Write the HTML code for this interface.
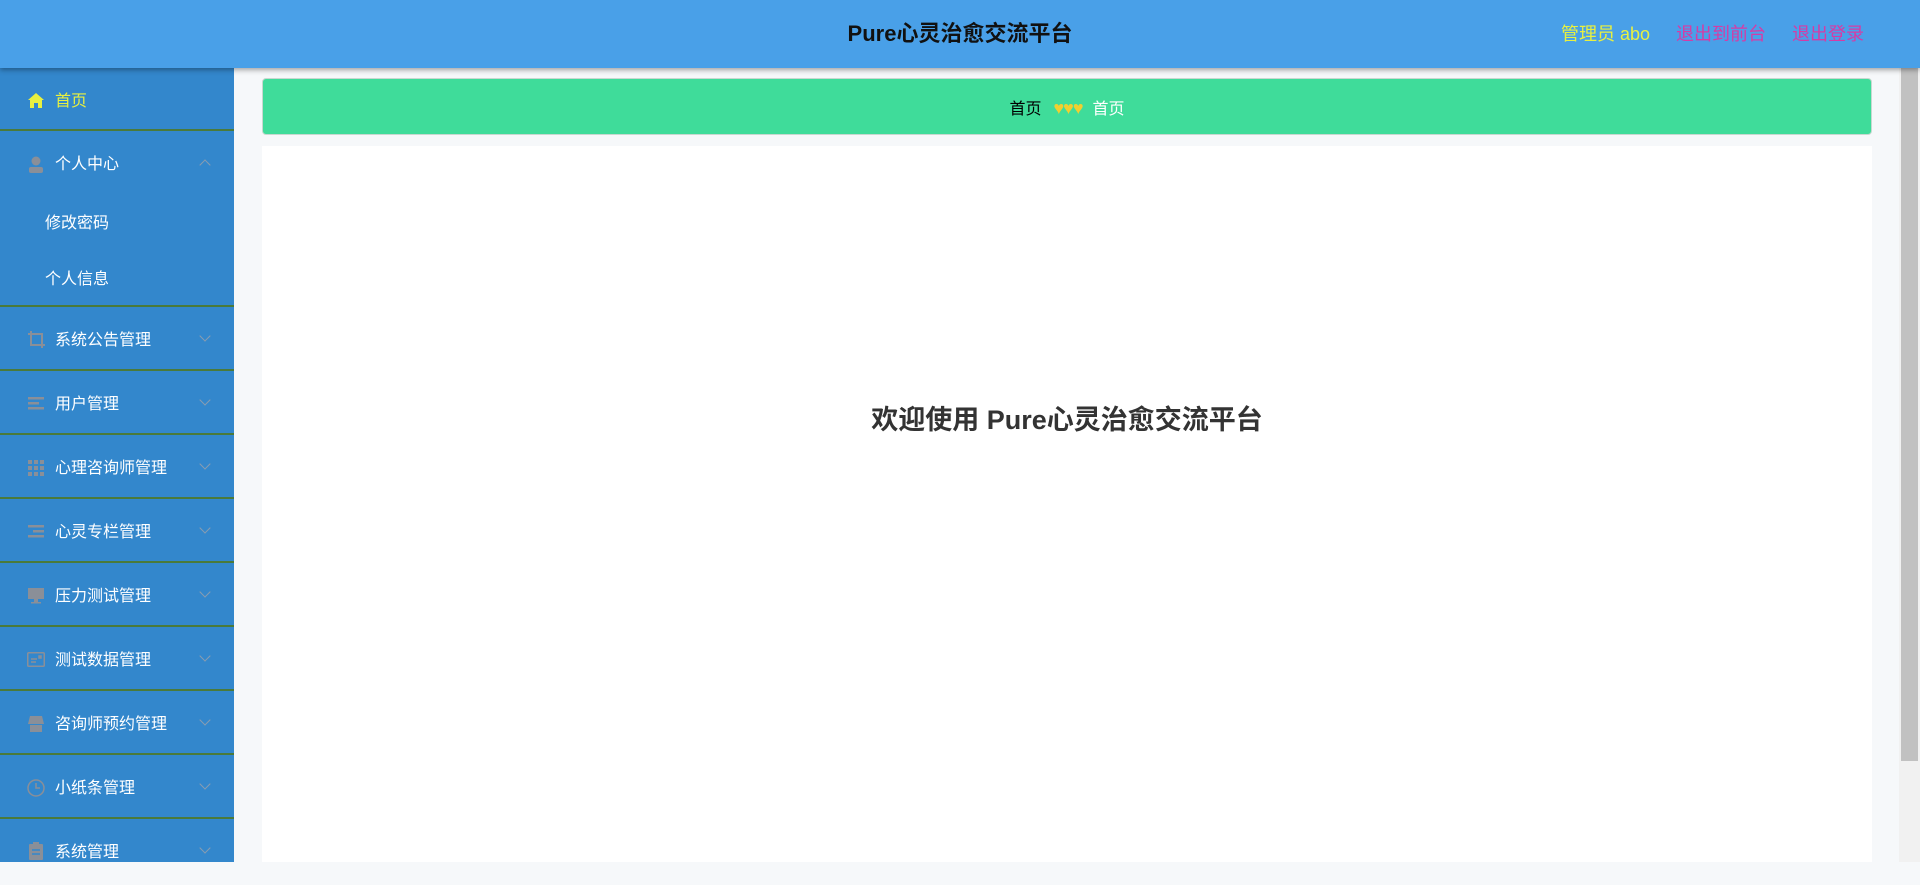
<!DOCTYPE html>
<html><head><meta charset="utf-8"><style>
*{margin:0;padding:0;box-sizing:border-box}
body{width:1920px;height:862px;overflow:hidden;background:#f6f8fa;font-family:"Liberation Sans","Noto Sans CJK SC",sans-serif;position:relative}
.hd{position:absolute;left:0;top:0;width:1920px;height:68px;background:#49a0e8;box-shadow:0 2px 5px rgba(0,0,0,.35);z-index:2}
.hd .t{position:absolute;left:0;width:1920px;text-align:center;top:0;line-height:68px;font-size:22px;font-weight:bold;color:#111}
.hd .r{position:absolute;right:56px;top:0;line-height:68px;font-size:18px}
.hd .r span{margin-left:26px}
.sb{position:absolute;left:0;top:68px;width:234px;height:794px;background:#3387cc}
.it{height:64px;border-bottom:2px solid #4a7a3a;position:relative;color:#fff;font-size:16px}
.it .tx{position:absolute;left:55px;top:2px;line-height:64px}
.it .ar{position:absolute;left:201px;top:25px;width:8px;height:8px;border-right:1px solid #8a9db0;border-bottom:1px solid #8a9db0;transform:rotate(45deg)}
.sub{height:56px;line-height:58px;color:#fff;font-size:16px;padding-left:45px}
.bc{position:absolute;left:262px;top:78px;width:1610px;height:57px;background:#3fdc9a;border-radius:4px;border:1px solid #c8d8d0;text-align:center;line-height:55px;font-size:16px}
.ct{position:absolute;left:262px;top:146px;width:1610px;height:716px;background:#fff}
.ct h1{position:absolute;top:252px;width:100%;text-align:center;font-size:27px;color:#333;font-weight:bold}
.scr{position:absolute;left:1899px;top:68px;width:21px;height:794px;background:#f1f1f1}
.scr i{position:absolute;left:2px;top:0;width:17px;height:693px;background:#c1c1c1}
</style></head><body>
<div class="hd"><div class="t">Pure心灵治愈交流平台</div>
<div class="r"><span style="color:#e8f040">管理员 abo</span><span style="color:#d63ba5">退出到前台</span><span style="color:#d63ba5">退出登录</span></div></div>
<div class="sb">
<div class="it" style="height:63px"><svg style="position:absolute;left:28px;top:25px" width="16" height="15" viewBox="0 0 16 15"><path d="M8 0L0 7h2v8h4v-5h4v5h4V7h2z" fill="#e8f040"/></svg><span class="tx" style="color:#e8f040;line-height:63px">首页</span></div>
<div class="it" style="height:176px"><svg style="position:absolute;left:28px;top:25px" width="16" height="17" viewBox="0 0 16 17"><circle cx="8" cy="5" r="4.5" fill="#8a8f98"/><rect x="1" y="11" width="14" height="6" rx="2" fill="#8a8f98"/></svg><span class="tx">个人中心</span><span class="ar" style="transform:rotate(225deg);top:30px"></span>
<div style="position:absolute;top:64px;width:100%"><div class="sub">修改密码</div><div class="sub">个人信息</div></div></div>
<div class="it"><svg style="position:absolute;left:28px;top:24px" width="17" height="17" viewBox="0 0 17 17" fill="none" stroke="#8a8f98" stroke-width="2"><path d="M3 0v14h14M0 3h14v14"/></svg><span class="tx">系统公告管理</span><span class="ar"></span></div>
<div class="it"><svg style="position:absolute;left:28px;top:26px" width="16" height="13"><rect width="16" height="2.5" fill="#8a8f98"/><rect y="5" width="11" height="2.5" fill="#8a8f98"/><rect y="10" width="16" height="2.5" fill="#8a8f98"/></svg><span class="tx">用户管理</span><span class="ar"></span></div>
<div class="it"><svg style="position:absolute;left:28px;top:25px" width="16" height="16" fill="#8a8f98"><rect width="4" height="4"/><rect x="6" width="4" height="4"/><rect x="12" width="4" height="4"/><rect y="6" width="4" height="4"/><rect x="6" y="6" width="4" height="4"/><rect x="12" y="6" width="4" height="4"/><rect y="12" width="4" height="4"/><rect x="6" y="12" width="4" height="4"/><rect x="12" y="12" width="4" height="4"/></svg><span class="tx">心理咨询师管理</span><span class="ar"></span></div>
<div class="it"><svg style="position:absolute;left:28px;top:26px" width="16" height="13" fill="#8a8f98"><rect width="16" height="2.5"/><rect x="5" y="5" width="11" height="2.5"/><rect y="10" width="16" height="2.5"/></svg><span class="tx">心灵专栏管理</span><span class="ar"></span></div>
<div class="it"><svg style="position:absolute;left:28px;top:25px" width="16" height="16" fill="#8a8f98"><rect width="16" height="11"/><rect x="6" y="11" width="4" height="3"/><rect x="3" y="14" width="10" height="1.5"/></svg><span class="tx">压力测试管理</span><span class="ar"></span></div>
<div class="it"><svg style="position:absolute;left:27px;top:25px" width="18" height="15" fill="none" stroke="#8a8f98" stroke-width="1.5"><rect x=".75" y=".75" width="16.5" height="13.5" rx="1"/><path d="M4 7h6M4 10h5"/><rect x="12" y="4" width="2" height="2" fill="#8a8f98"/></svg><span class="tx">测试数据管理</span><span class="ar"></span></div>
<div class="it"><svg style="position:absolute;left:28px;top:25px" width="16" height="16" fill="#8a8f98"><path d="M2 0h12l2 8H0z"/><rect x="2" y="9" width="12" height="7"/></svg><span class="tx">咨询师预约管理</span><span class="ar"></span></div>
<div class="it"><svg style="position:absolute;left:27px;top:24px" width="18" height="18" fill="none" stroke="#8a8f98" stroke-width="1.5"><circle cx="9" cy="9" r="8"/><path d="M9 4v5h4"/></svg><span class="tx">小纸条管理</span><span class="ar"></span></div>
<div class="it" style="border:0"><svg style="position:absolute;left:29px;top:23px" width="14" height="18" fill="#8a8f98"><rect y="2" width="14" height="16" rx="1"/><rect x="4" width="6" height="4" fill="#8a8f98"/><path d="M3 8h8M3 12h8" stroke="#3387cc" stroke-width="1.5"/></svg><span class="tx">系统管理</span><span class="ar"></span></div>
</div>
<div class="bc" style="padding-top:2px"><span style="color:#000">首页</span><span style="color:#f0d030;margin:0 10px 0 12px;font-size:18px;letter-spacing:-1px">♥♥♥</span><span style="color:#fff">首页</span></div>
<div class="ct"><h1>欢迎使用 Pure心灵治愈交流平台</h1></div>
<div class="scr"><i></i></div>
</body></html>
